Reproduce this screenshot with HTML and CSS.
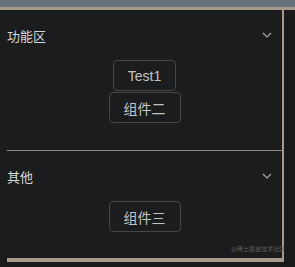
FILE: index.html
```html
<!DOCTYPE html>
<html lang="zh-CN">
<head>
    <meta charset="UTF-8">
    <title>折叠面板</title>
    <link rel="stylesheet" href="styles.css">
</head>
<body>
    <div class="topbar"></div>
    <div class="panel">
        <div class="content">
            <div class="section">
                <div class="section-head">
                    <span>功能区</span>
                    <svg class="chevron" width="10" height="6" viewBox="0 0 10 6"><path d="M1 1 L5 5 L9 1" fill="none" stroke="#a9a9a9" stroke-width="1.2"/></svg>
                </div>
                <div class="section-body">
                    <button class="btn">Test1</button>
                    <button class="btn">组件二</button>
                </div>
            </div>
            <div class="section last">
                <div class="section-head">
                    <span>其他</span>
                    <svg class="chevron" width="10" height="6" viewBox="0 0 10 6"><path d="M1 1 L5 5 L9 1" fill="none" stroke="#a9a9a9" stroke-width="1.2"/></svg>
                </div>
                <div class="section-body">
                    <button class="btn">组件三</button>
                </div>
            </div>
        </div>
        <div class="watermark">@稀土掘金技术社区</div>
    </div>
</body>
</html>
```

FILE: styles.css
```css
body {
    margin: 0;
    background: #1a1a1b;
    font-family: "Liberation Sans", "Noto Sans CJK SC", sans-serif;
    height: 267px;
    overflow: hidden;
}
.topbar {
    height: 7px;
    background: #68737a;
    border-bottom: 3px solid #a99b8b;
}
.panel {
    position: relative;
    width: 282px;
    background: #1b1c1e;
    border-right: 2px solid #a99b8b;
}
.content {
    margin-left: 7px;
    border-bottom: 4px solid #a99b8b;
}
.section {
    border-bottom: 1px solid #8a8a8a;
}
.section.last {
    border-bottom: none;
}
.section-head {
    height: 50px;
    display: flex;
    align-items: center;
    justify-content: space-between;
    padding-right: 10px;
    color: #d6d6d6;
    font-size: 13px;
}
.chevron {
    display: block;
}
.section-body {
    display: flex;
    flex-direction: column;
    align-items: center;
    gap: 1px;
    padding-bottom: 27px;
}
.section.last .section-body {
    padding-bottom: 26px;
}
.btn {
    height: 31px;
    padding: 0 14px;
    background: transparent;
    border: 1px solid #444546;
    border-radius: 4px;
    color: #c4c4c4;
    font-family: inherit;
    font-size: 14px;
}
.watermark {
    position: absolute;
    right: -3px;
    bottom: 9px;
    font-size: 6px;
    color: #5c5c5c;
}
```
